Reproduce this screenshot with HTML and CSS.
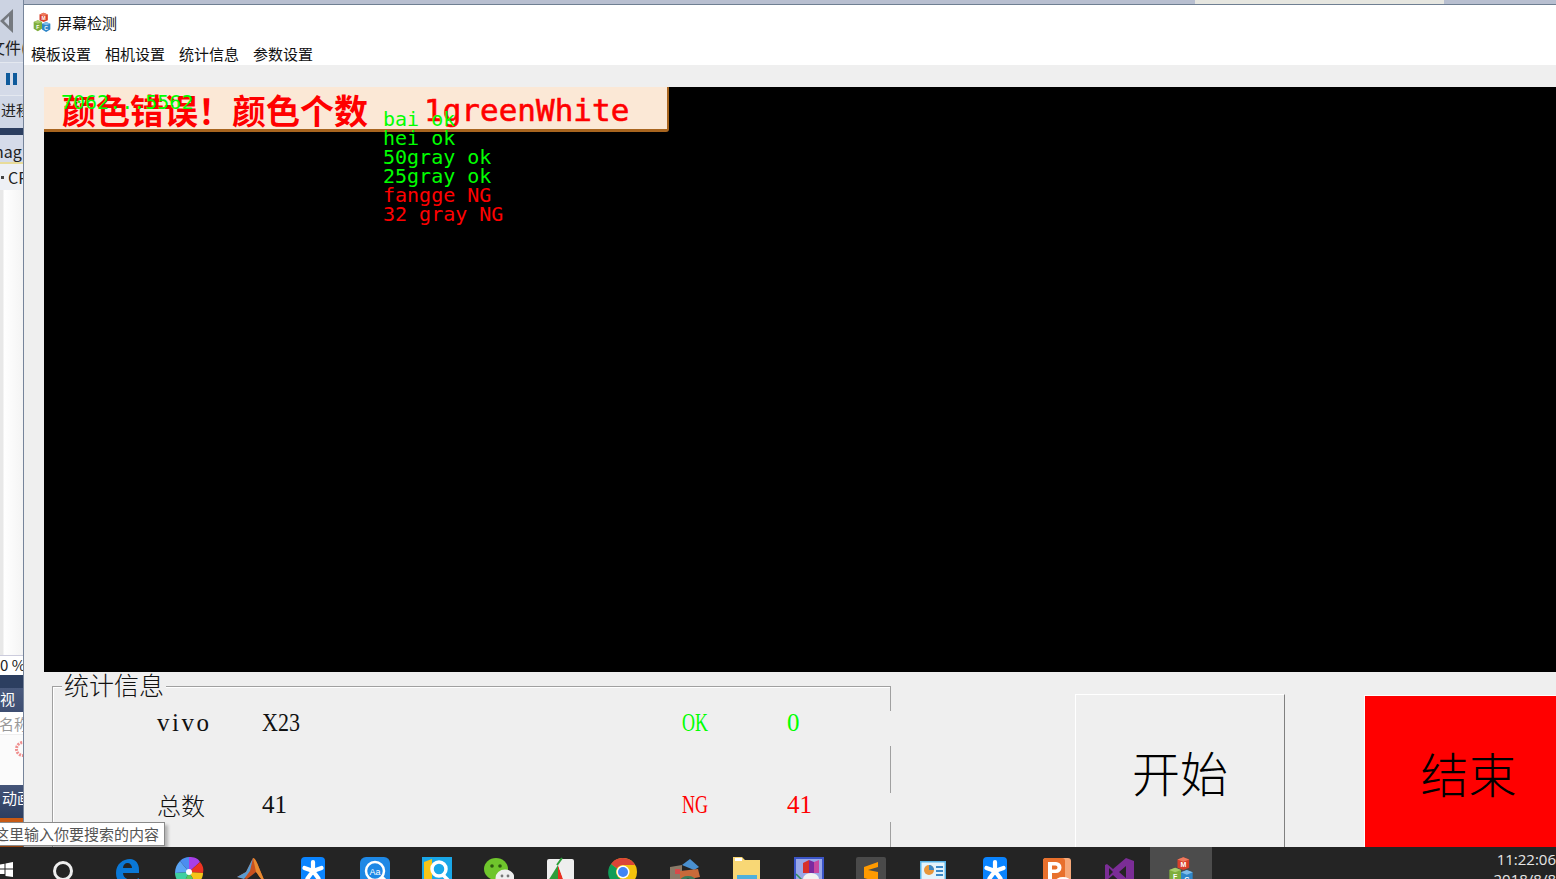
FILE: index.html
```html
<!DOCTYPE html>
<html lang="zh-CN">
<head>
    <meta charset="UTF-8">
    <title>屏幕检测</title>
    <link rel="stylesheet" href="styles.css">
</head>
<body>
    <svg class="defs" width="0" height="0">
        <symbol id="mfc" viewBox="0 0 24 24">
            <path d="M9 3l5-2 5 2v7l-5 2-5-2z" fill="#d8402a"/>
            <path d="M9 3l5 2 5-2-5-2z" fill="#ee7a5e"/>
            <path d="M2 12l5-2 5 2v8l-5 3-5-3z" fill="#7fae3c"/>
            <path d="M2 12l5 2 5-2-5-2z" fill="#a8cc6a"/>
            <path d="M12 14l5-2 5 2v7l-5 3-5-3z" fill="#2f86c8"/>
            <path d="M12 14l5 2 5-2-5-2z" fill="#7fbde8"/>
            <text x="14" y="9.5" class="cube-letter">M</text>
            <text x="7" y="20" class="cube-letter">F</text>
            <text x="17" y="22" class="cube-letter">C</text>
        </symbol>
        <symbol id="star" viewBox="0 0 24 30">
            <rect width="24" height="30" rx="4" fill="#0a84ff"/>
            <path d="M12 5v9M12 14l8.500-3M12 14l-8.500-3M12 14l5.500 7.500M12 14l-5.500 7.500" stroke="#fff" stroke-width="4.200" stroke-linecap="round"/>
        </symbol>
    </svg>

    <div class="desktop">
        <!-- the program behind the window, only its edge shows -->
        <aside class="behind">
            <div class="vs-menu">
                <svg class="vs-logo" width="14" height="26" viewBox="0 0 14 26"><path d="M13 1v24L0 13z M9 8l-5 5 5 5z" fill="#75797f" fill-rule="evenodd"/></svg>
                <span class="vs-file">文件(</span>
            </div>
            <div class="vs-toolbar"><i class="pause"></i><i class="pause"></i></div>
            <div class="vs-process">进程</div>
            <div class="vs-navy"></div>
            <div class="vs-tab">nag</div>
            <div class="vs-cpu"><i class="dot"></i>CP</div>
            <div class="vs-white"></div>
            <div class="vs-percent">0 %</div>
            <div class="vs-navy vs-navy-thin"></div>
            <div class="vs-head">视</div>
            <div class="vs-name">名称</div>
            <div class="vs-row"><svg class="vs-mark" width="8" height="16" viewBox="0 0 8 16"><circle cx="8" cy="8" r="6.500" fill="none" stroke="#ef8f8f" stroke-width="3" stroke-dasharray="2 1"/></svg></div>
            <div class="vs-head vs-head-dark">动画</div>
            <div class="vs-orange"></div>
        </aside>

        <main class="app">
            <div class="top-edge"><span class="top-tab"></span></div>
            <div class="titlebar">
                <svg class="app-icon" width="20" height="20"><use href="#mfc"/></svg>
                <span>屏幕检测</span>
            </div>
            <nav class="menu">
                <span>模板设置</span>
                <span>相机设置</span>
                <span>统计信息</span>
                <span>参数设置</span>
            </nav>

            <div class="client">
                <section class="view">
                    <div class="banner">
                        <span class="banner-cn">颜色错误！颜色个数</span>
                        <span class="banner-en">1greenWhite</span>
                    </div>
                    <div class="coords">7062...5562</div>
                    <ul class="checks">
                        <li class="ok">bai ok</li>
                        <li class="ok">hei ok</li>
                        <li class="ok">50gray ok</li>
                        <li class="ok">25gray ok</li>
                        <li class="ng">fangge NG</li>
                        <li class="ng">32 gray NG</li>
                    </ul>
                </section>

                <section class="controls">
                    <div class="stats">
                        <h2 class="stats-title">统计信息</h2>
                        <div class="stats-grid">
                            <span class="wide">vivo</span>
                            <span class="squeeze-x">X23</span>
                            <span class="squeeze green">OK</span>
                            <span class="green">0</span>
                            <span class="cjk">总数</span>
                            <span>41</span>
                            <span class="squeeze red">NG</span>
                            <span class="red">41</span>
                        </div>
                        <i class="stats-edge"></i>
                    </div>
                    <button class="btn btn-start">开始</button>
                    <button class="btn btn-stop">结束</button>
                </section>
            </div>
        </main>
        <div class="search-tip">这里输入你要搜索的内容</div>
    </div>

    <footer class="taskbar">
        <div class="start">
            <svg width="13" height="17" viewBox="0 0 13 17"><path d="M0 2.500L4.500 1.800V6.500H0zM5.500 1.600L13 0V6.500H5.500zM0 7.500H4.500V12H0zM5.500 7.500H13V15L5.500 14z" fill="#fff"/></svg>
        </div>
        <div class="search-slot"><i class="ring"></i></div>

        <div class="slot"><svg width="30" height="30" viewBox="0 0 30 30"><path d="M4 16C4 7 11 2 18 2c6 0 9 5 9 11v3H11c0 5 5 7 9 7 3 0 5-1 7-2v6c-3 1-5 2-9 2C9 29 4 24 4 16zM11 11h9c0-3-2-5-4.500-5S11 8 11 11z" fill="#0a78d7"/></svg></div>
        <div class="slot"><svg width="30" height="30" viewBox="0 0 30 30"><path d="M15 15L6 4C9 1 12 0 15 0z" fill="#4b8df0"/><path d="M15 15V0c5 0 9 1 11 5z" fill="#a83fe8"/><path d="M15 15L26 5c3 3 4 7 3 11z" fill="#ee3322"/><path d="M15 15l14 1c0 5-3 9-7 11z" fill="#f5c518"/><path d="M15 15l7 12c-4 3-9 3-13 1z" fill="#5ac85a"/><path d="M15 15L9 28C4 26 1 21 1 16z" fill="#3fd0a0"/><path d="M15 15L1 16c0-5 2-9 5-12z" fill="#5aa5f5"/><circle cx="15" cy="15" r="3" fill="#fff"/></svg></div>
        <div class="slot"><svg width="30" height="30" viewBox="0 0 30 30"><path d="M1 20l9-5 7-14c3 0 5 8 12 24-5-3-7-8-9-10-3 2-6 5-9 7z" fill="#c8501e"/><path d="M1 20l9-5 7-14-3 13-6 8z" fill="#5a9bd0"/><path d="M17 1c3 0 5 8 12 24-5-3-7-8-9-10z" fill="#e88a30"/></svg></div>
        <div class="slot"><svg width="24" height="30"><use href="#star"/></svg></div>
        <div class="slot"><svg width="30" height="30" viewBox="0 0 30 30"><rect width="30" height="30" rx="6" fill="#1e88e5"/><circle cx="15" cy="14" r="9" fill="none" stroke="#fff" stroke-width="2.500"/><path d="M22 20l5 5" stroke="#fff" stroke-width="3"/><text x="15" y="18" class="lens-text">Aa</text></svg></div>
        <div class="slot"><svg width="30" height="30" viewBox="0 0 30 30"><rect width="30" height="30" fill="#19a7e8"/><path d="M2 5l8-3v28H2z" fill="#f5c518"/><path d="M10 22h18v8H10z" fill="#e8324a"/><circle cx="17" cy="12" r="7" fill="none" stroke="#fff" stroke-width="3.500"/><path d="M21 18l6 6" stroke="#fff" stroke-width="3.500"/></svg></div>
        <div class="slot"><svg width="30" height="30" viewBox="0 0 30 30"><ellipse cx="12" cy="12" rx="12" ry="11" fill="#6fc52c"/><circle cx="8" cy="9" r="1.800" fill="#2d5a10"/><circle cx="16" cy="9" r="1.800" fill="#2d5a10"/><ellipse cx="21" cy="21" rx="9.500" ry="8.500" fill="#eeeeee"/><circle cx="18" cy="19" r="1.400" fill="#777"/><circle cx="24" cy="19" r="1.400" fill="#777"/></svg></div>
        <div class="slot"><svg width="30" height="30" viewBox="0 0 30 30"><rect x="1" y="2" width="27" height="28" rx="2" fill="#eeeeee"/><path d="M12 8L2 24l10 6z" fill="#2e9e3a"/><path d="M12 8l8 22h-8z" fill="#e83020"/><path d="M12 8l15 16-7 6z" fill="#f0f0f0"/><path d="M11 8l5-7" stroke="#2e9e3a" stroke-width="2"/></svg></div>
        <div class="slot"><svg width="30" height="30" viewBox="0 0 30 30"><circle cx="15" cy="15" r="14" fill="#f4c20d"/><path d="M15 1A14 14 0 0 1 27.100 8H15A7 7 0 0 0 8.900 11.500L3 7A14 14 0 0 1 15 1z" fill="#db4437"/><path d="M3 7l6 4.500A7 7 0 0 0 12 21.300L8 28A14 14 0 0 1 3 7z" fill="#0f9d58"/><circle cx="15" cy="15" r="6.500" fill="#fff"/><circle cx="15" cy="15" r="5" fill="#4285f4"/></svg></div>
        <div class="slot"><svg width="30" height="30" viewBox="0 0 30 30"><path d="M0 10l12-2v20H0z" fill="#8a7a68"/><path d="M12 8l8-6 9 8-5 3z" fill="#4a90d0"/><path d="M10 14l18-2 2 8-20 4z" fill="#c86a3a"/><ellipse cx="18" cy="24" rx="8" ry="5" fill="#3a7a5a"/><circle cx="18" cy="24" r="2.500" fill="#1f3a2a"/><path d="M5 12h5v5H5z" fill="#d84a4a"/></svg></div>
        <div class="slot"><svg width="30" height="30" viewBox="0 0 30 30"><path d="M1 0h9l3 3h15v27H1z" fill="#f8d775"/><path d="M3 1h7v3H3z" fill="#fff"/><path d="M5 18h20v12H5z" fill="#4fb0dd"/><path d="M10 22h10v8H10z" fill="#f8e7b0"/></svg></div>
        <div class="slot"><svg width="30" height="30" viewBox="0 0 30 30"><rect width="30" height="30" fill="#9aa8e8"/><rect x="1" y="1" width="28" height="28" fill="none" stroke="#3b55c8" stroke-width="2"/><path d="M9 6l6-3v13H9z" fill="#d8302a"/><path d="M15 3l5 2v11h-5z" fill="#7a2aa0"/><path d="M20 5l5-2v13h-5z" fill="#c848a0"/><ellipse cx="17" cy="22" rx="8" ry="6" fill="#f2f2f2"/><path d="M2 17l8 8" stroke="#2e8e5a" stroke-width="1.500"/></svg></div>
        <div class="slot"><svg width="30" height="30" viewBox="0 0 30 30"><rect width="30" height="30" rx="2" fill="#4a4a4a"/><path d="M22 5L8 10v6l14 4v-5L12 13l10-3zM8 16v5l14 4v-5z" fill="#ff9a00"/></svg></div>
        <div class="slot"><svg width="26" height="30" viewBox="0 0 26 30"><rect y="4" width="26" height="26" fill="#58b4e8"/><rect x="1.500" y="5.500" width="23" height="23" fill="#e4f3fb"/><circle cx="9" cy="13" r="5" fill="#e8963a"/><path d="M9 13V8a5 5 0 0 1 5 5z" fill="#3a88c8"/><path d="M16 9h7v2h-7zM16 13h7v2h-7zM16 17h7v2h-7z" fill="#3a88c8"/></svg></div>
        <div class="slot"><svg width="24" height="30"><use href="#star"/></svg></div>
        <div class="slot"><svg width="28" height="30" viewBox="0 0 28 30"><rect x="0" y="1" width="28" height="29" rx="3" fill="#f6a878"/><rect x="0" y="1" width="22" height="29" rx="3" fill="#e8702c"/><path d="M5 5h8a5 5 0 0 1 0 11H9v7H5zM9 8.500V12.500h3.500a2 2 0 0 0 0-4z" fill="#fff" fill-rule="evenodd"/><ellipse cx="20" cy="25" rx="8" ry="5" fill="#fff"/><ellipse cx="20" cy="24" rx="4" ry="2" fill="#e0591c"/></svg></div>
        <div class="slot"><svg width="29" height="30" viewBox="0 0 29 30"><path d="M21 1l8 3v24l-8 2-13-12-6 5-2-1V8l2-1 6 5zM4 11v8l4-4zM21 9l-7 6 7 6z" fill="#7b2d96" fill-rule="evenodd"/></svg></div>
        <div class="slot slot-active"><svg width="28" height="30"><use href="#mfc"/></svg></div>

        <div class="clock">
            <span>11:22:06</span>
            <span>2018/8/8</span>
        </div>
    </footer>
</body>
</html>
```

FILE: styles.css
```css
* {
    box-sizing: border-box;
}

body {
    margin: 0;
    width: 1556px;
    height: 879px;
    overflow: hidden;
    background-color: #efefef;
    font-family: "Noto Sans CJK SC", "Noto Sans", sans-serif;
    font-size: 15px;
    color: #111;
}

.defs {
    display: block;
    height: 0;
}

.cube-letter {
    font-family: "Liberation Sans", sans-serif;
    font-size: 6px;
    font-weight: bold;
    fill: #fff;
    text-anchor: middle;
}

.lens-text {
    font-family: "Liberation Sans", sans-serif;
    font-size: 9px;
    fill: #fff;
    text-anchor: middle;
}

.desktop {
    position: relative;
    display: flex;
    height: 847px;
    overflow: hidden;
}

/* Program behind the window */
.behind {
    display: flex;
    flex-direction: column;
    flex: 0 0 23px;
    width: 23px;
    overflow: hidden;
    white-space: nowrap;
    background-color: #fff;
}

.vs-menu {
    height: 62px;
    background-color: #ccd3e2;
}

.vs-logo {
    display: block;
    margin-top: 8px;
}

.vs-file {
    display: block;
    margin: 3px 0 0 -11px;
    line-height: 20px;
    font-size: 16px;
    color: #222;
}

.vs-toolbar {
    display: flex;
    gap: 3px;
    height: 33px;
    padding: 10px 0 0 6px;
    background-color: #d4dae8;
    border-top: 1px solid #e4e8f0;
}

.pause {
    width: 4px;
    height: 12px;
    background-color: #0e5a9c;
}

.vs-process {
    height: 33px;
    padding-top: 4px;
    line-height: 20px;
    text-indent: 1px;
    background-color: #d0d7e6;
    border-top: 1px solid #e4e8f0;
    color: #222;
}

.vs-navy {
    height: 7px;
    background-color: #2c3e60;
}

.vs-navy-thin {
    height: 13px;
}

.vs-tab {
    height: 29px;
    padding-top: 3px;
    text-indent: -6px;
    line-height: 26px;
    font-size: 16px;
    background-color: #d5dbe9;
    border-bottom: 2px solid #e8dc9a;
    color: #222;
}

.vs-cpu {
    display: flex;
    align-items: center;
    gap: 4px;
    height: 26px;
    font-size: 16px;
    background-color: #eef0f5;
    color: #222;
}

.dot {
    flex: none;
    width: 3px;
    height: 3px;
    margin-left: 1px;
    background-color: #444;
}

.vs-white {
    flex: 1;
    background: linear-gradient(to right, #e8e8e8 3px, #fff 4px, #f4f4f4);
}

.vs-percent {
    height: 20px;
    line-height: 17px;
    background-color: #fff;
    border-top: 1px solid #ccd;
    color: #222;
}

.vs-head {
    height: 24px;
    line-height: 21px;
    background: linear-gradient(#4a5a7e, #3e4e72);
    color: #fff;
}

.vs-name {
    height: 23px;
    line-height: 24px;
    text-indent: -1px;
    background-color: #fff;
    border-bottom: 1px solid #eee;
    color: #999;
}

.vs-row {
    height: 50px;
    background-color: #fbfbfb;
}

.vs-mark {
    display: block;
    margin: 6px 0 0 15px;
}

.vs-head-dark {
    height: 33px;
    padding-top: 2px;
    text-indent: 2px;
    background: linear-gradient(#445478, #2c3e60);
}

.vs-orange {
    height: 29px;
    background-color: #c85a14;
}

/* Dialog */
.app {
    display: flex;
    flex-direction: column;
    flex: 1;
    min-width: 0;
    border-left: 1px solid #76849a;
}

.top-edge {
    flex: none;
    height: 5px;
    background-color: #b8bfd0;
    border-bottom: 1px solid #6f7f92;
}

.top-tab {
    display: block;
    width: 249px;
    height: 4px;
    margin-left: 1171px;
    background-color: #e6e6e0;
}

.titlebar {
    display: flex;
    align-items: center;
    gap: 5px;
    flex: none;
    height: 36px;
    padding: 0 0 2px 8px;
    background-color: #fff;
}

.app-icon {
    display: block;
}

.menu {
    display: flex;
    align-items: center;
    gap: 14px;
    flex: none;
    height: 24px;
    padding: 0 0 0 7px;
    background-color: #fff;
}

.client {
    flex: 1;
    min-height: 0;
    padding-top: 22px;
    background-color: #efefef;
}

.view {
    position: relative;
    height: 585px;
    margin-left: 20px;
    background-color: #000;
}

.banner {
    display: flex;
    align-items: center;
    width: 625px;
    height: 45px;
    padding: 3px 0 0 18px;
    background-color: #fbe8d6;
    border-right: 2px solid #a8651f;
    border-bottom: 3px solid #a8651f;
    border-bottom-right-radius: 3px;
    color: #f00;
}

.banner-cn {
    font-size: 34px;
    font-weight: bold;
    line-height: 44px;
}

.banner-en {
    margin-left: 56px;
    font-family: "DejaVu Sans Mono", monospace;
    font-size: 31px;
    line-height: 44px;
    -webkit-text-stroke: 0.6px #f00;
}

.coords {
    position: absolute;
    top: 4px;
    left: 17px;
    font-family: "DejaVu Sans Mono", monospace;
    font-size: 20px;
    line-height: 23px;
    color: #0f0;
}

.checks {
    position: absolute;
    top: 23px;
    left: 339px;
    margin: 0;
    padding: 0;
    list-style: none;
    font-family: "DejaVu Sans Mono", monospace;
    font-size: 20px;
    line-height: 19px;
}

.ok {
    color: #0f0;
}

.ng {
    color: #f00;
}

/* Lower panel */
.controls {
    display: flex;
    align-items: flex-start;
    height: 175px;
    overflow: hidden;
}

.stats {
    position: relative;
    flex: none;
    width: 839px;
    height: 170px;
    margin: 14px 0 0 28px;
    border-top: 1px solid #a0a0a0;
    border-left: 1px solid #a0a0a0;
    box-shadow: inset 1px 1px 0 #fff;
}

.stats-title {
    position: absolute;
    top: -17px;
    left: 9px;
    margin: 0;
    padding: 0 2px;
    font-size: 25px;
    font-weight: 300;
    line-height: 28px;
    background-color: #efefef;
    color: #111;
}

.stats-grid {
    display: grid;
    grid-template-columns: 105px 420px 105px 40px;
    grid-auto-rows: 32px;
    row-gap: 50px;
    padding: 20px 0 0 104px;
    font-family: "Liberation Serif", serif;
    font-size: 25px;
    line-height: 32px;
    color: #111;
}

.wide {
    letter-spacing: 2.5px;
}

.squeeze-x {
    transform: scaleX(0.88);
    transform-origin: left;
}

.squeeze {
    transform: scaleX(0.72);
    transform-origin: left;
}

.green {
    color: #0f0;
}

.red {
    color: #f00;
}

.cjk {
    font-family: "Noto Sans CJK SC", sans-serif;
    font-size: 24px;
    font-weight: 300;
}

/* right edge of the box is only partly painted in the screenshot */
.stats-edge {
    position: absolute;
    top: 0;
    right: 0;
    width: 1px;
    height: 161px;
    background: linear-gradient(#a0a0a0 24px, transparent 24px 59px, #a0a0a0 59px 106px, transparent 106px 135px, #a0a0a0 135px);
}

.btn {
    flex: none;
    width: 210px;
    height: 170px;
    padding: 0 0 18px;
    border: none;
    border-top: 1px solid #fff;
    border-left: 1px solid #fff;
    border-right: 1px solid #808080;
    font-family: "Noto Sans CJK SC", sans-serif;
    font-size: 48px;
    font-weight: 300;
    color: #000;
}

.btn-start {
    margin: 22px 0 0 184px;
    background-color: #efefef;
}

.btn-stop {
    width: 208px;
    margin: 23px 0 0 79px;
    background-color: #f00;
    border-right: none;
}

.search-tip {
    position: absolute;
    top: 822px;
    left: -9px;
    height: 24px;
    padding: 0 5px 0 2px;
    line-height: 22px;
    white-space: nowrap;
    background-color: #fff;
    border: 1px solid #8a8a8a;
    box-shadow: 3px 3px 3px rgba(0, 0, 0, 0.25);
    color: #555;
}

/* Taskbar */
.taskbar {
    display: flex;
    height: 32px;
    overflow: hidden;
    background-color: #242424;
}

.start {
    flex: none;
    width: 37px;
    padding-top: 15px;
}

.start svg {
    display: block;
}

.search-slot {
    flex: none;
    width: 59px;
    padding: 14px 0 0 16px;
}

.ring {
    display: block;
    width: 20px;
    height: 20px;
    border: 3px solid #eee;
    border-radius: 50%;
}

.slot {
    display: flex;
    justify-content: center;
    flex: none;
    width: 62px;
    padding-top: 10px;
}

.slot-active {
    padding-top: 8px;
    background-color: #4c4c4c;
}

.clock {
    display: flex;
    flex-direction: column;
    flex: 1;
    align-items: flex-end;
    padding-top: 2px;
    font-family: "Open Sans", sans-serif;
    font-size: 15px;
    line-height: 20px;
    white-space: nowrap;
    color: #e6e6e6;
}
```
